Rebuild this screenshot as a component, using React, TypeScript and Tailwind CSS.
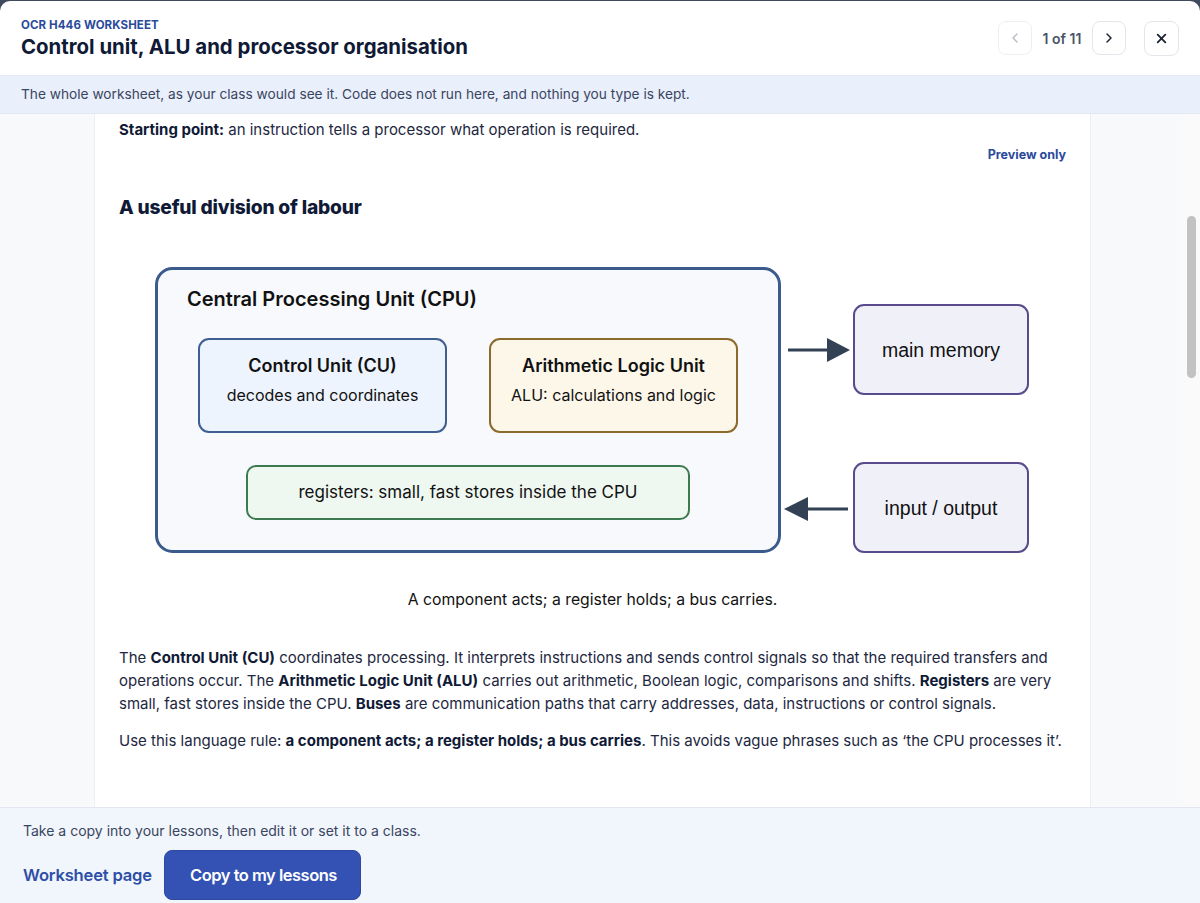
import React from "react";

function ChevronLeft({ className }: { className?: string }) {
  return (
    <svg viewBox="0 0 24 24" className={className} fill="none" stroke="currentColor" strokeWidth="2" strokeLinecap="round" strokeLinejoin="round">
      <path d="M15 18l-6-6 6-6" />
    </svg>
  );
}
function ChevronRight({ className }: { className?: string }) {
  return (
    <svg viewBox="0 0 24 24" className={className} fill="none" stroke="currentColor" strokeWidth="2.2" strokeLinecap="round" strokeLinejoin="round">
      <path d="M9 18l6-6-6-6" />
    </svg>
  );
}
function XIcon({ className }: { className?: string }) {
  return (
    <svg viewBox="0 0 24 24" className={className} fill="none" stroke="currentColor" strokeWidth="3.4" strokeLinecap="round">
      <path d="M5 5l14 14M19 5L5 19" />
    </svg>
  );
}

function Diagram() {
  const inter = "Inter, 'Noto Sans', sans-serif";
  const arial = "'Liberation Sans', Arial, sans-serif";
  return (
    <svg width="885" height="300" viewBox="0 0 885 300" className="block">
      <rect x="6.5" y="7.5" width="623" height="283" rx="16" fill="#f7f9fc" stroke="#3b5b8c" strokeWidth="3" />
      <text x="37" y="45" fontFamily={inter} fontSize="20" fontWeight="600" fill="#111111">Central Processing Unit (CPU)</text>

      <rect x="49" y="78" width="247" height="93" rx="10" fill="#eef4fd" stroke="#3f5f90" strokeWidth="2" />
      <text x="172.5" y="111" textAnchor="middle" fontFamily={inter} fontSize="18" fontWeight="600" fill="#111111">Control Unit (CU)</text>
      <text x="172.5" y="140" textAnchor="middle" fontFamily={inter} fontSize="16" fill="#111111">decodes and coordinates</text>

      <rect x="340" y="78" width="247" height="93" rx="10" fill="#fdf7ea" stroke="#8c6a2c" strokeWidth="2" />
      <text x="463.5" y="111" textAnchor="middle" fontFamily={inter} fontSize="18" fontWeight="600" fill="#111111">Arithmetic Logic Unit</text>
      <text x="463.5" y="140" textAnchor="middle" fontFamily={inter} fontSize="16" fill="#111111">ALU: calculations and logic</text>

      <rect x="97" y="205" width="442" height="53" rx="9" fill="#eef7f0" stroke="#3c7a4f" strokeWidth="2" />
      <text x="318" y="237" textAnchor="middle" fontFamily={inter} fontSize="17" fill="#111111">registers: small, fast stores inside the CPU</text>

      <rect x="704" y="44" width="174" height="89" rx="10" fill="#f0f0f9" stroke="#5a4b8c" strokeWidth="2" />
      <text x="791" y="96" textAnchor="middle" fontFamily={arial} fontSize="19.5" fill="#111111">main memory</text>

      <rect x="704" y="202" width="174" height="89" rx="10" fill="#f0f0f9" stroke="#5a4b8c" strokeWidth="2" />
      <text x="791" y="254" textAnchor="middle" fontFamily={arial} fontSize="19.5" fill="#111111">input / output</text>

      <line x1="638" y1="89" x2="680" y2="89" stroke="#334155" strokeWidth="3" />
      <polygon points="700,89 677,77 677,101" fill="#334155" />

      <line x1="656" y1="248" x2="698" y2="248" stroke="#334155" strokeWidth="3" />
      <polygon points="634,248 658,236 658,260" fill="#334155" />
    </svg>
  );
}

export default function App() {
  return (
    <div className="w-[1200px] h-[903px] overflow-hidden bg-[#3f4a5c] pt-px" style={{ fontFamily: "Inter, 'Noto Sans', sans-serif" }}>
      <div className="h-[902px] bg-white rounded-t-[10px] flex flex-col overflow-hidden">
        {/* Header */}
        <div className="h-[75px] shrink-0 flex items-center justify-between pl-[21px] pr-[21px] border-b border-[#e3e7ef]">
          <div className="flex flex-col pt-[2px]">
            <div className="text-[11.5px] leading-[14px] font-bold text-[#2a4a9b] tracking-[0.1px]">OCR H446 WORKSHEET</div>
            <div className="text-[20.4px] leading-[28px] font-bold text-[#101a36] mt-[1px]">Control unit, ALU and processor organisation</div>
          </div>
          <div className="flex items-center">
            <button className="w-[34px] h-[34px] rounded-lg border border-[#eceef2] flex items-center justify-center text-[#b5bac3]">
              <ChevronLeft className="w-[16px] h-[16px]" />
            </button>
            <div className="w-[60px] text-center text-[14px] font-semibold text-[#4a5468]">1 of 11</div>
            <button className="w-[34px] h-[34px] rounded-lg border border-[#e3e6eb] flex items-center justify-center text-[#1c2435]">
              <ChevronRight className="w-[16px] h-[16px]" />
            </button>
            <button className="ml-[18px] w-[35px] h-[35px] rounded-lg border border-[#e3e6eb] flex items-center justify-center text-[#1c2435]">
              <XIcon className="w-[13px] h-[13px]" />
            </button>
          </div>
        </div>
        {/* Info bar */}
        <div className="h-[38px] shrink-0 bg-[#e9effb] flex items-center pl-[21px] text-[13.7px] text-[#3a4560] border-b border-[#e3e8f2]">
          The whole worksheet, as your class would see it. Code does not run here, and nothing you type is kept.
        </div>
        {/* Content */}
        <div className="flex-1 flex min-h-0">
          <div className="w-[95px] shrink-0 bg-[#f8f9fb] border-r border-[#eceef2]" />
          <div className="flex-1 bg-white px-[24px] pt-[4px] text-[#1d2740]">
            <p className="text-[15px] leading-[23px]">
              <strong className="font-bold text-[#101a36]">Starting point:</strong> an instruction tells a processor what operation is required.
            </p>
            <div className="flex justify-end mt-[5px]">
              <span className="text-[12.5px] leading-[18px] font-bold text-[#2a4a9b]">Preview only</span>
            </div>
            <h2 className="mt-[30px] text-[19.2px] leading-[26px] font-extrabold text-[#101a36] tracking-[-0.2px]">A useful division of labour</h2>
            <div className="mt-[41px] flex justify-center">
              <Diagram />
            </div>
            <p className="mt-[28px] text-center text-[15.75px] leading-[22px] text-[#111111]">A component acts; a register holds; a bus carries.</p>
            <p className="mt-[35px] text-[15px] leading-[23px]">
              The <strong className="font-bold text-[#101a36]">Control Unit (CU)</strong> coordinates processing. It interprets instructions and sends control signals so that the required transfers and operations occur. The <strong className="font-bold text-[#101a36]">Arithmetic Logic Unit (ALU)</strong> carries out arithmetic, Boolean logic, comparisons and shifts. <strong className="font-bold text-[#101a36]">Registers</strong> are very small, fast stores inside the CPU. <strong className="font-bold text-[#101a36]">Buses</strong> are communication paths that carry addresses, data, instructions or control signals.
            </p>
            <p className="mt-[14px] text-[15px] leading-[23px]">
              Use this language rule: <strong className="font-bold text-[#101a36]">a component acts; a register holds; a bus carries</strong>. This avoids vague phrases such as ‘the CPU processes it’.
            </p>
          </div>
          <div className="w-[93px] shrink-0 bg-[#f8f9fb] border-l border-[#eceef2]" />
          <div className="w-[17px] shrink-0 bg-[#fafafa] flex justify-center">
            <div className="w-[9px] h-[162px] mt-[102px] rounded-full bg-[#c2c2c2]" />
          </div>
        </div>
        {/* Footer */}
        <div className="h-[96px] shrink-0 bg-[#f1f5fc] border-t border-[#e1e6f0] pl-[23px] pt-[13px]">
          <div className="text-[14px] leading-[20px] text-[#3a4560]">Take a copy into your lessons, then edit it or set it to a class.</div>
          <div className="flex items-center mt-[9px]">
            <a className="w-[129px] whitespace-nowrap text-[16.6px] font-semibold text-[#2d4ea6] tracking-[-0.2px] pt-[1px]">Worksheet page</a>
            <button className="ml-[12px] w-[197px] h-[50px] rounded-lg bg-[#3352b3] text-white text-[16.5px] font-semibold tracking-[-0.5px] border border-[#2c48a0] pl-[2px]">Copy to my lessons</button>
          </div>
        </div>
      </div>
    </div>
  );
}
